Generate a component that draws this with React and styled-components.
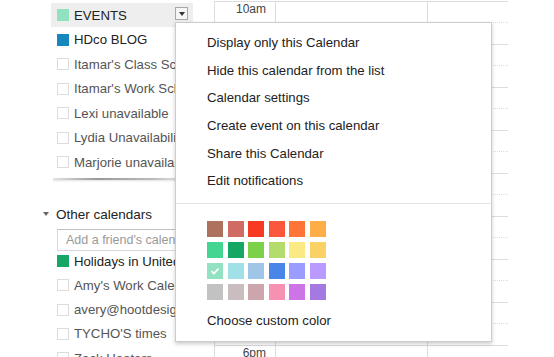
import React from 'react';
import styled, { createGlobalStyle } from 'styled-components';

const GlobalStyle = createGlobalStyle`
  html, body {
    margin: 0;
    padding: 0;
    background: #fff;
    overflow: hidden;
  }
  body {
    font-family: 'Liberation Sans', Arial, sans-serif;
  }
`;

const Page = styled.div`
  position: relative;
  width: 554px;
  height: 357px;
  display: flex;
  overflow: hidden;
`;

const Sidebar = styled.div`
  width: 214px;
  flex-shrink: 0;
  padding-top: 3px;
  box-sizing: border-box;
`;

const List = styled.div`
  display: flex;
  flex-direction: column;
  gap: ${(p) => p.$gap}px;
`;

const Row = styled.div`
  display: flex;
  align-items: center;
  gap: 5px;
  height: ${(p) => p.$h}px;
  margin-left: 51px;
  width: 142px;
  padding-left: 6px;
  box-sizing: border-box;
  background: ${(p) => (p.$active ? '#eeeeee' : 'transparent')};
  position: relative;
`;

const Swatch = styled.span`
  width: 12px;
  height: 12px;
  flex-shrink: 0;
  box-sizing: border-box;
  background: ${(p) => p.$color || '#fff'};
  border: ${(p) => (p.$color ? 'none' : '1px solid #dcdcdc')};
`;

const Label = styled.span`
  font-size: 13.2px;
  color: ${(p) => (p.$on ? '#222' : '#555')};
  white-space: nowrap;
  overflow: hidden;
  width: 118px;
`;

const DropButton = styled.span`
  position: absolute;
  left: 124px;
  top: 4px;
  width: 13px;
  height: 13px;
  box-sizing: border-box;
  border: 1px solid #a8a8a8;
  background: #f6f6f6;
  display: flex;
  align-items: center;
  justify-content: center;

  &::after {
    content: '';
    border-left: 3px solid transparent;
    border-right: 3px solid transparent;
    border-top: 4px solid #333;
  }
`;

const Divider = styled.div`
  margin: 4px 0 0 53px;
  width: 124px;
  height: 2px;
  background: linear-gradient(to right, #e4e4e4, #999 35%, #bbb 80%, #ddd);
  box-shadow: 0 1px 2px rgba(0, 0, 0, 0.12);
`;

const SectionHeader = styled.div`
  display: flex;
  align-items: center;
  gap: 7px;
  margin: 25px 0 0 43px;
  height: 18px;
  font-size: 13.5px;
  color: #222;

  &::before {
    content: '';
    border-left: 3.5px solid transparent;
    border-right: 3.5px solid transparent;
    border-top: 4px solid #666;
  }
`;

const FriendInput = styled.input`
  display: block;
  margin: 6px 0 0 57px;
  width: 140px;
  height: 22px;
  box-sizing: border-box;
  border: 1px solid #d9d9d9;
  border-top-color: #c0c0c0;
  padding: 0 8px;
  font-family: 'Liberation Sans', Arial, sans-serif;
  font-size: 12.5px;
  outline: none;

  &::placeholder {
    color: #999;
  }
`;

const Grid = styled.div`
  display: flex;
  margin-top: 1px;
  height: 400px;
`;

const Column = styled.div`
  width: ${(p) => p.$w}px;
  box-sizing: border-box;
  border-left: ${(p) => (p.$edge ? '1px solid #ddd' : 'none')};
  border-right: ${(p) => (p.$divider ? '1px solid #ddd' : 'none')};
  display: flex;
  flex-direction: column;
`;

const HourSlot = styled.div`
  height: 43px;
  flex-shrink: 0;
  box-sizing: border-box;
  border-top: 1px solid #dddddd;
  display: flex;
  flex-direction: column;
`;

const HalfSlot = styled.div`
  height: 21px;
  box-sizing: border-box;
  border-bottom: 1px dotted #dcdcdc;
`;

const TimeLabel = styled.div`
  font-size: 12px;
  color: #444;
  text-align: right;
  padding: 0 9px 0 0;
  line-height: 14px;
`;

const Menu = styled.div`
  position: absolute;
  left: 175px;
  top: 22px;
  width: 317px;
  height: 320px;
  box-sizing: border-box;
  background: #fff;
  border: 1px solid rgba(0, 0, 0, 0.2);
  box-shadow: 0 2px 4px rgba(0, 0, 0, 0.2);
  padding-top: 6px;
  display: flex;
  flex-direction: column;
`;

const MenuItem = styled.div`
  height: 27.6px;
  display: flex;
  align-items: center;
  padding-left: 31px;
  font-size: 13.2px;
  color: #222;
  white-space: nowrap;
`;

const MenuSeparator = styled.div`
  margin-top: 8px;
  height: 1px;
  background: #e5e5e5;
`;

const Palette = styled.div`
  display: grid;
  grid-template-columns: repeat(6, 16px);
  column-gap: 4.5px;
  row-gap: 5.3px;
  margin: 17px 0 0 31px;
`;

const Chip = styled.div`
  width: 16px;
  height: 16px;
  background: ${(p) => p.$color};
  display: flex;
  align-items: center;
  justify-content: center;
`;

const CustomColor = styled.div`
  margin: 13px 0 0 31px;
  font-size: 13.2px;
  line-height: 16px;
  color: #222;
`;

const myCalendars = [
  { name: 'EVENTS', color: '#92e1c0', on: true, active: true },
  { name: 'HDco BLOG', color: '#1587bd', on: true },
  { name: "Itamar's Class Sch" },
  { name: "Itamar's Work Sch." },
  { name: 'Lexi unavailable' },
  { name: 'Lydia Unavailability' },
  { name: 'Marjorie unavailable' },
];

const otherCalendars = [
  { name: 'Holidays in United States', color: '#16a765', on: true },
  { name: "Amy's Work Calendar" },
  { name: 'avery@hootdesign.com' },
  { name: "TYCHO'S times" },
  { name: 'Zack Hooters' },
];

const menuItems = [
  'Display only this Calendar',
  'Hide this calendar from the list',
  'Calendar settings',
  'Create event on this calendar',
  'Share this Calendar',
  'Edit notifications',
];

const palette = [
  '#ac725e', '#d06b64', '#f83a22', '#fa573c', '#ff7537', '#ffad46',
  '#42d692', '#16a765', '#7bd148', '#b3dc6c', '#fbe983', '#fad165',
  '#92e1c0', '#9fe1e7', '#9fc6e7', '#4986e7', '#9a9cff', '#b99aff',
  '#c2c2c2', '#cabdbf', '#cca6ac', '#f691b2', '#cd74e6', '#a47ae2',
];

const hours = ['10am', '11am', '12pm', '1pm', '2pm', '3pm', '4pm', '5pm', '6pm'];

const Check = () => (
  <svg width="10" height="10" viewBox="0 0 10 10">
    <path d="M1.5 5.2 L4 7.5 L8.5 2.5" fill="none" stroke="#fff" strokeWidth="1.8" />
  </svg>
);

const App = () => {
  return (
    <Page>
      <GlobalStyle />
      <Sidebar>
        <List $gap={0.5}>
          {myCalendars.map((c) => (
            <Row key={c.name} $h={24} $active={c.active}>
              <Swatch $color={c.color} />
              <Label $on={c.on}>{c.name}</Label>
              {c.active && <DropButton />}
            </Row>
          ))}
        </List>
        <Divider />
        <SectionHeader>Other calendars</SectionHeader>
        <FriendInput type="text" placeholder="Add a friend's calendar" />
        <List $gap={4.3}>
          {otherCalendars.map((c) => (
            <Row key={c.name} $h={20}>
              <Swatch $color={c.color} />
              <Label $on={c.on}>{c.name}</Label>
            </Row>
          ))}
        </List>
      </Sidebar>

      <Grid>
        <Column $w={62} $edge $divider>
          {hours.map((h) => (
            <HourSlot key={h}>
              <TimeLabel>{h}</TimeLabel>
            </HourSlot>
          ))}
        </Column>
        <Column $w={152} $divider>
          {hours.map((h) => (
            <HourSlot key={h}>
              <HalfSlot />
            </HourSlot>
          ))}
        </Column>
        <Column $w={80}>
          {hours.map((h) => (
            <HourSlot key={h}>
              <HalfSlot />
            </HourSlot>
          ))}
        </Column>
      </Grid>

      <Menu>
        {menuItems.map((m) => (
          <MenuItem key={m}>{m}</MenuItem>
        ))}
        <MenuSeparator />
        <Palette>
          {palette.map((c, i) => (
            <Chip key={c} $color={c}>
              {i === 12 && <Check />}
            </Chip>
          ))}
        </Palette>
        <CustomColor>Choose custom color</CustomColor>
      </Menu>
    </Page>
  );
};

export default App;
